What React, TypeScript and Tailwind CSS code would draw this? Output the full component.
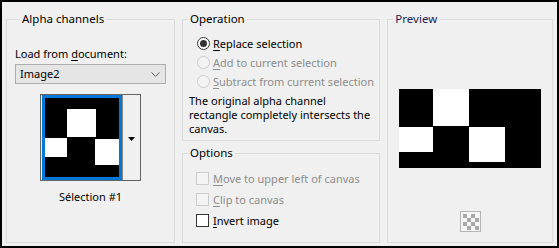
import React from "react"

const font = { fontFamily: '"Noto Sans", "Liberation Sans", sans-serif' }

function Key({ children }: { children: string }) {
  return <span className="underline underline-offset-[2px] decoration-1">{children}</span>
}

function Radio({ checked, disabled, label, k }: { checked?: boolean; disabled?: boolean; label: string; k: string }) {
  const rest = label.slice(k.length)
  return (
    <div className={`flex h-[19px] items-center gap-[3px] whitespace-nowrap ${disabled ? "text-[#8d8d8d]" : "text-black"}`}>
      <span
        className={`flex h-[13px] w-[13px] shrink-0 items-center justify-center rounded-full border ${
          disabled ? "border-[#cccccc] bg-[#f4f4f4]" : "border-[#333333] bg-white"
        }`}
      >
        {checked && <span className="h-[7px] w-[7px] rounded-full bg-[#333333]" />}
      </span>
      <span>
        <Key>{k}</Key>
        {rest}
      </span>
    </div>
  )
}

function Check({ disabled, label, k }: { disabled?: boolean; label: string; k: string }) {
  const rest = label.slice(k.length)
  return (
    <div className={`flex h-[21px] items-center gap-[4px] whitespace-nowrap ${disabled ? "text-[#8d8d8d]" : "text-black"}`}>
      <span
        className={`h-[13px] w-[13px] shrink-0 border ${disabled ? "border-[#cccccc] bg-[#f4f4f4]" : "border-[#333333] bg-white"}`}
      />
      <span>
        <Key>{k}</Key>
        {rest}
      </span>
    </div>
  )
}

function Group({ title, className, titleClass, children }: { title: string; className?: string; titleClass?: string; children: React.ReactNode }) {
  return (
    <fieldset className={`border border-[#dcdcdc] ${className ?? ""}`}>
      <legend className={`ml-[5px] px-[2px] text-[11.5px] leading-[16px] ${titleClass ?? "text-black"}`}>{title}</legend>
      {children}
    </fieldset>
  )
}

export default function App() {
  return (
    <div
      style={font}
      className="flex h-[248px] w-[559px] gap-[7px] border-2 border-black bg-[#f0f0f0] pb-[3px] pl-[4px] pr-[4px] pt-[9px] text-[11px] leading-[16px] text-black"
    >
      {/* Alpha channels */}
      <Group title="Alpha channels" className="w-[167px] px-[8px]">
        <div className="mt-[19px] whitespace-nowrap">
          Load from <Key>d</Key>ocument:
        </div>
        <div className="mt-[2px] flex h-[20px] w-[151px] items-center justify-between border border-[#adadad] bg-[#e5e5e5] pl-[4px] pr-[5px]">
          <span>Image2</span>
          <svg width="9" height="5" viewBox="0 0 9 5" fill="none" stroke="#5a5a5a" strokeWidth="1">
            <path d="M0.5 0.5 L4.5 4.5 L8.5 0.5" />
          </svg>
        </div>
        <div className="mt-[10px] flex justify-center">
          <div className="flex h-[87px] w-[101px] border border-[#646464] bg-[#f0f0f0]">
            <div className="ml-[1px] h-[85px] w-[80px] border-[3px] border-[#0078d7] bg-black">
              <svg width="74" height="79" viewBox="0 0 74 79">
                <rect width="74" height="79" fill="#000" />
                <rect x="22" y="11" width="29" height="28" fill="#fff" />
                <rect x="0" y="40" width="22" height="19" fill="#fff" />
                <rect x="50" y="41" width="24" height="26" fill="#fff" />
              </svg>
            </div>
            <div className="flex flex-1 items-center justify-center border-l border-[#8a8a8a] pt-[2px]">
              <svg width="7" height="4" viewBox="0 0 7 4">
                <path d="M0 0 H7 L3.5 4 Z" fill="#000" />
              </svg>
            </div>
          </div>
        </div>
        <div className="mt-[8px] text-center">Sélection #1</div>
      </Group>

      {/* Middle column */}
      <div className="flex w-[200px] flex-col gap-[4px]">
        <Group title="Operation" className="h-[130px]">
          <div className="mt-[7px] pl-[14px]">
            <Radio checked label="Replace selection" k="R" />
            <Radio disabled label="Add to current selection" k="A" />
            <Radio disabled label="Subtract from current selection" k="S" />
          </div>
          <div className="mt-[3px] whitespace-nowrap pl-[6px] leading-[14px]">
            The original alpha channel
            <br />
            rectangle completely intersects the
            <br />
            canvas.
          </div>
        </Group>
        <Group title="Options" className="flex-1">
          <div className="mt-[7px] pl-[13px]">
            <Check disabled label="Move to upper left of canvas" k="M" />
            <Check disabled label="Clip to canvas" k="C" />
            <Check label="Invert image" k="I" />
          </div>
        </Group>
      </div>

      {/* Preview */}
      <Group title="Preview" className="w-[167px]" titleClass="text-[#1c1c5a]">
        <div className="mt-[62px] flex justify-center">
          <svg width="142" height="79" viewBox="0 0 142 79">
            <rect width="142" height="79" fill="#000" />
            <rect x="34" y="0" width="36" height="37" fill="#fff" />
            <rect x="0" y="38" width="34" height="25" fill="#fff" />
            <rect x="70" y="38" width="36" height="35" fill="#fff" />
          </svg>
        </div>
        <div className="mt-[43px] flex justify-center">
          <svg width="21" height="21" viewBox="0 0 21 21">
            <rect x="0.5" y="0.5" width="20" height="20" fill="#f6f6f6" stroke="#b4b4b4" />
            {[0, 1, 2, 3].map((r) =>
              [0, 1, 2, 3].map((c) =>
                (r + c) % 2 === 0 ? (
                  <rect key={`${r}-${c}`} x={3 + c * 4} y={3 + r * 4} width="4" height="4" fill="#a8a8a8" />
                ) : null
              )
            )}
          </svg>
        </div>
      </Group>
    </div>
  )
}
